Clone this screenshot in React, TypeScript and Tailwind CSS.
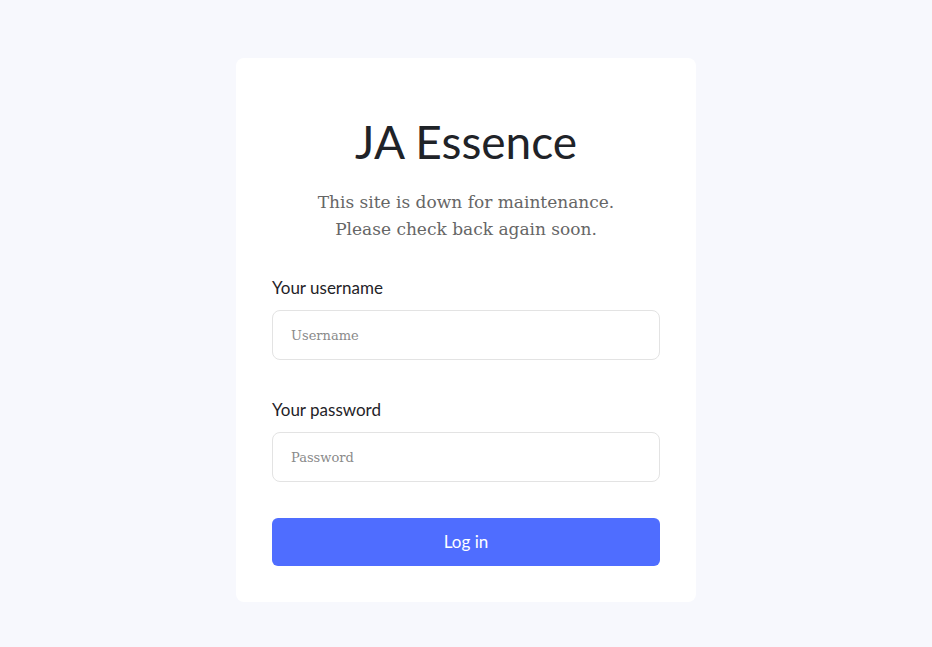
export default function App() {
  return (
    <div className="flex min-h-[647px] w-full items-start justify-center bg-[#f7f8fd] pt-[58px]">
      <div className="w-[460px] rounded-lg bg-white px-9 pb-9 pt-[60px]">
        <h1 className="text-center font-['Lato',sans-serif] text-[46px] leading-[48px] font-normal text-[#1f2328]">
          JA Essence
        </h1>
        <p className="mt-[23px] text-center font-['DejaVu_Serif',serif] text-[17px] leading-[27px] text-[#666]">
          This site is down for maintenance.
          <br />
          Please check back again soon.
        </p>
        <form className="mt-[35px] flex flex-col" onSubmit={(e) => e.preventDefault()}>
          <label className="font-['Lato',sans-serif] text-[17px] leading-5 text-[#1f2328]">Your username</label>
          <input
            placeholder="Username"
            className="mt-3 h-[50px] rounded-lg border border-[#e3e3e3] px-[18px] font-['DejaVu_Serif',serif] text-[13px] placeholder:text-[#8a8a8a] outline-none"
          />
          <label className="mt-[40px] font-['Lato',sans-serif] text-[17px] leading-5 text-[#1f2328]">Your password</label>
          <input
            type="password"
            placeholder="Password"
            className="mt-3 h-[50px] rounded-lg border border-[#e3e3e3] px-[18px] font-['DejaVu_Serif',serif] text-[13px] placeholder:text-[#8a8a8a] outline-none"
          />
          <button className="mt-9 h-12 rounded-md bg-[#4f6dff] font-['Lato',sans-serif] text-[17px] text-white">
            Log in
          </button>
        </form>
      </div>
    </div>
  );
}
